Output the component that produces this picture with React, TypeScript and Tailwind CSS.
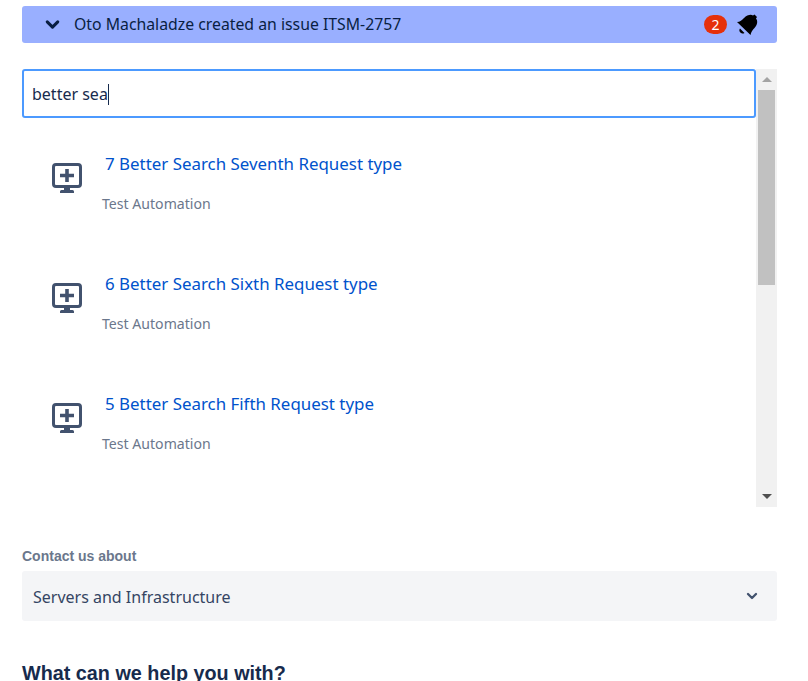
import { ChevronDown } from "lucide-react";

const requestTypes = [
  "7 Better Search Seventh Request type",
  "6 Better Search Sixth Request type",
  "5 Better Search Fifth Request type",
];

function MonitorPlus() {
  return (
    <svg width="30" height="30" viewBox="0 0 30 30" className="mt-[2px] shrink-0">
      <rect x="1.500" y="1.500" width="27" height="22" rx="2.500" fill="none" stroke="#42526e" strokeWidth="3" />
      <path d="M13.200 6h3.600v4.700h5.200v3.600h-5.200V19h-3.600v-4.700H8v-3.600h5.200z" fill="#42526e" />
      <path d="M12 24h6v3h2.500a1.500 1.500 0 0 1 1.500 1.500V30H8v-1.500A1.500 1.500 0 0 1 9.500 27H12z" fill="#42526e" />
    </svg>
  );
}

function Bell() {
  return (
    <svg width="22" height="22" viewBox="0 0 22 22">
      <path d="M1 8C4 8 6 6 8 4C11 1 15 0 17 1.500L18.500 .5L21 3L20 4.500C22 7 21.500 11 18.500 14C16.500 16 15 18 14.500 21Z" fill="#000" />
      <path d="M4 14.500L8.500 19C7 20 5 19.500 4 18C3 17 3.300 15.500 4 14.500Z" fill="#000" />
    </svg>
  );
}

export default function App() {
  return (
    <div className="h-[681px] overflow-hidden bg-white px-[22px] pt-[6px] pr-[31px] font-['Noto_Sans',sans-serif]">
      {/* banner */}
      <div className="flex h-[37px] items-center rounded-[3px] bg-[#99afff] pl-[20px] pr-[19px]">
        <ChevronDown className="h-[21px] w-[21px] text-[#091e42]" strokeWidth={3.500} />
        <span className="ml-[11px] text-[15.800px] text-[#091e42]">Oto Machaladze created an issue ITSM-2757</span>
        <span className="ml-auto flex h-[19px] w-[23px] items-center justify-center rounded-full bg-[#e5300b] text-[14px] leading-none text-white">
          2
        </span>
        <span className="ml-[9px] flex">
          <Bell />
        </span>
      </div>

      {/* search and results */}
      <div className="mt-[26px] flex h-[438px]">
        <div className="min-w-0 flex-1">
          <div className="flex h-[49px] items-center rounded-[3px] border-2 border-[#4c9aff] pl-2 pt-px">
            <span className="text-[16px] text-[#172b4d]">better sea</span>
            <span className="h-[21px] w-px bg-[#172b4d]" />
          </div>
          {requestTypes.map((name) => (
            <div key={name} className="flex h-[120px] items-start pl-[30px] pt-[43px]">
              <MonitorPlus />
              <div className="-mt-[9px] ml-[20px]">
                <div className="ml-[3px] text-[16.900px] leading-[24px] text-[#0052cc]">{name}</div>
                <div className="mt-[18px] text-[14.100px] leading-[20px] text-[#6b778c]">Test Automation</div>
              </div>
            </div>
          ))}
        </div>
        <div className="flex w-[21px] flex-col bg-[#f1f1f1]">
          <div className="flex h-[21px] items-center justify-center">
            <div className="border-x-[5px] border-b-[5px] border-x-transparent border-b-[#a3a3a3]" />
          </div>
          <div className="ml-[2px] h-[195px] w-[17px] bg-[#c1c1c1]" />
          <div className="mt-auto flex h-[21px] items-center justify-center">
            <div className="border-x-[5px] border-t-[5px] border-x-transparent border-t-[#505050]" />
          </div>
        </div>
      </div>

      {/* contact */}
      <div className="mt-[40px] font-['Liberation_Sans',sans-serif] text-[14px] font-bold leading-[18px] text-[#6b778c]">
        Contact us about
      </div>
      <div className="mt-[6px] flex h-[50px] items-center rounded-[3px] bg-[#f4f5f7] pl-[11px] pr-[17px]">
        <span className="pt-px text-[16px] text-[#344563]">Servers and Infrastructure</span>
        <ChevronDown className="ml-auto h-[16px] w-[16px] text-[#42526e]" strokeWidth={3.500} />
      </div>
      <h2 className="mt-[40px] font-['Liberation_Sans',sans-serif] text-[19.800px] font-bold leading-[24px] text-[#172b4d]">
        What can we help you with?
      </h2>
    </div>
  );
}
